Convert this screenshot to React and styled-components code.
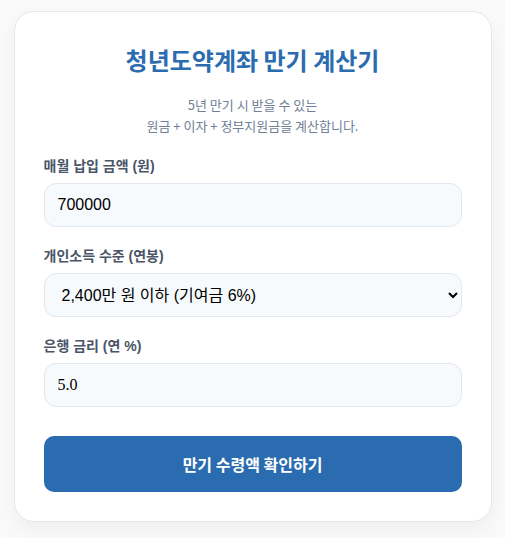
import React from 'react'
import styled, { createGlobalStyle } from 'styled-components'

const GlobalStyle = createGlobalStyle`
  * { box-sizing: border-box; }
  body {
    margin: 0;
    background: #fafafa;
    font-family: "Liberation Sans", "Noto Sans CJK KR", sans-serif;
  }
`

const Page = styled.div`
  padding-top: 11px;
  padding-bottom: 16px;
`

const Card = styled.div`
  width: 478px;
  margin: 0 auto;
  background: #ffffff;
  border: 1px solid #e2e8f0;
  border-radius: 20px;
  padding: 30px 29px 29px;
  box-shadow: 0 8px 24px rgba(0, 0, 0, 0.05);
`

const Title = styled.h1`
  margin: 0;
  font-family: "Noto Sans CJK KR", sans-serif;
  font-size: 24px;
  font-weight: 700;
  line-height: 36px;
  color: #2b6cb0;
  text-align: center;
`

const Subtitle = styled.p`
  margin: 16px 0 21px;
  font-family: "Noto Sans CJK KR", sans-serif;
  font-size: 13px;
  line-height: 21px;
  color: #718096;
  text-align: center;
`

const Field = styled.div`
  display: flex;
  flex-direction: column;
  margin-bottom: 20px;
`

const Label = styled.label`
  font-family: "Liberation Sans", "Noto Sans CJK KR", sans-serif;
  font-size: 14px;
  font-weight: 700;
  line-height: 18px;
  color: #4a5568;
  margin-bottom: 8px;
`

const Input = styled.input`
  height: 44px;
  width: 100%;
  padding: 0 13px;
  border: 1px solid #e2e8f0;
  border-radius: 12px;
  background: #f7fafc;
  font-family: ${p => (p.$serif ? '"Liberation Serif", serif' : '"Liberation Sans", sans-serif')};
  font-size: 16px;
  color: #000;
  outline: none;
`

const Select = styled.select`
  height: 44px;
  width: 100%;
  padding: 0 8px 0 13px;
  border: 1px solid #e2e8f0;
  border-radius: 12px;
  background: #f7fafc;
  font-family: "Liberation Sans", "Noto Sans CJK KR", sans-serif;
  font-size: 16px;
  color: #000;
  outline: none;
`

const Button = styled.button`
  display: block;
  width: 100%;
  height: 56px;
  margin-top: 29px;
  border: none;
  border-radius: 10px;
  background: #2b6cb0;
  color: #ffffff;
  font-family: "Noto Sans CJK KR", sans-serif;
  font-size: 16px;
  font-weight: 700;
  cursor: pointer;
`

export default function App() {
  return (
    <Page>
      <GlobalStyle />
      <Card>
        <Title>청년도약계좌 만기 계산기</Title>
        <Subtitle>
          5년 만기 시 받을 수 있는
          <br />
          원금 + 이자 + 정부지원금을 계산합니다.
        </Subtitle>
        <Field>
          <Label>매월 납입 금액 (원)</Label>
          <Input type="text" defaultValue="700000" />
        </Field>
        <Field>
          <Label>개인소득 수준 (연봉)</Label>
          <Select defaultValue="6">
            <option value="6">2,400만 원 이하 (기여금 6%)</option>
            <option value="4.6">3,600만 원 이하 (기여금 4.6%)</option>
            <option value="3.7">4,800만 원 이하 (기여금 3.7%)</option>
            <option value="3">6,000만 원 이하 (기여금 3%)</option>
          </Select>
        </Field>
        <Field>
          <Label>은행 금리 (연 %)</Label>
          <Input $serif type="text" defaultValue="5.0" />
        </Field>
        <Button>만기 수령액 확인하기</Button>
      </Card>
    </Page>
  )
}
